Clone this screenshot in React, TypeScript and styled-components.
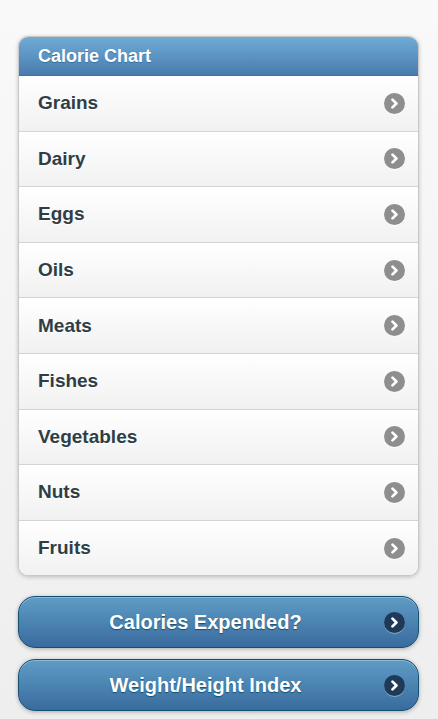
import React from 'react';
import styled, { createGlobalStyle } from 'styled-components';

const GlobalStyle = createGlobalStyle`
  html, body {
    margin: 0;
    padding: 0;
  }
  body {
    font-family: "Liberation Sans", Arial, Helvetica, sans-serif;
    background: linear-gradient(#f9f9f9, #eeeeee);
    min-height: 719px;
  }
`;

const foods = ['Grains', 'Dairy', 'Eggs', 'Oils', 'Meats', 'Fishes', 'Vegetables', 'Nuts', 'Fruits'];

// Круглая иконка со стрелкой вправо (как в jQuery Mobile)
const ArrowIcon: React.FC<{ dark?: boolean }> = ({ dark }) => (
  <IconDisc $dark={dark}>
    <svg width="11" height="11" viewBox="0 0 11 11">
      <path d="M3.5 1.6 L7.4 5.5 L3.5 9.4" fill="none" stroke="#fff" strokeWidth="2.7" strokeLinecap="round" strokeLinejoin="round" />
    </svg>
  </IconDisc>
);

const App: React.FC = () => {
  return (
    <>
      <GlobalStyle />
      <Page>
        <ListView>
          <Divider>Calorie Chart</Divider>
          {foods.map((food, i) => (
            <Row key={food} $last={i === foods.length - 1}>
              <RowLabel>{food}</RowLabel>
              <ArrowIcon />
            </Row>
          ))}
        </ListView>
        <Buttons>
          <BlueButton>
            <ButtonLabel>Calories Expended?</ButtonLabel>
            <ArrowIcon dark />
          </BlueButton>
          <BlueButton>
            <ButtonLabel>Weight/Height Index</ButtonLabel>
            <ArrowIcon dark />
          </BlueButton>
        </Buttons>
      </Page>
    </>
  );
};

const Page = styled.div`
  padding: 36px 19px 0 18px;
  display: flex;
  flex-direction: column;
`;

const ListView = styled.div`
  display: flex;
  flex-direction: column;
  border: 1px solid #c8c8c8;
  border-radius: 10px;
  overflow: hidden;
  box-shadow: 0 1px 4px rgba(0, 0, 0, 0.22);
  background: #fff;
`;

const Divider = styled.div`
  height: 38px;
  display: flex;
  align-items: center;
  padding-left: 19px;
  font-size: 18px;
  font-weight: bold;
  color: #fff;
  text-shadow: 0 1px 0 #3373a5;
  background: linear-gradient(#6facd5, #497bae);
  border-bottom: 1px solid #456f9a;
`;

const Row = styled.div<{ $last?: boolean }>`
  height: 54.6px;
  display: flex;
  align-items: center;
  justify-content: space-between;
  padding: 0 13px 0 19px;
  background: linear-gradient(#ffffff, #f1f1f1);
  border-bottom: ${(p) => (p.$last ? 'none' : '1px solid #d4d4d4')};
`;

const RowLabel = styled.span`
  font-size: 19px;
  font-weight: bold;
  color: #2f3e46;
  text-shadow: 0 1px 0 #fff;
`;

const IconDisc = styled.span<{ $dark?: boolean }>`
  width: 21px;
  height: 21px;
  border-radius: 50%;
  display: flex;
  align-items: center;
  justify-content: center;
  flex: none;
  background: ${(p) => (p.$dark ? '#1e3a58' : '#8e8e8e')};
  box-shadow: ${(p) => (p.$dark ? '0 1px 0 rgba(255,255,255,0.35)' : '0 1px 0 rgba(255,255,255,0.6)')};
`;

const Buttons = styled.div`
  display: flex;
  flex-direction: column;
  gap: 11px;
  margin-top: 20px;
`;

const BlueButton = styled.div`
  height: 50px;
  display: flex;
  align-items: center;
  padding: 0 13px 0 15px;
  border: 1px solid #145072;
  border-radius: 17px;
  background: linear-gradient(#5f9cc5, #396b9e);
  box-shadow: inset 0 1px 0 rgba(255, 255, 255, 0.3), 0 1px 4px rgba(0, 0, 0, 0.3);
`;

const ButtonLabel = styled.span`
  flex: 1;
  text-align: center;
  padding-right: 7px;
  font-size: 20px;
  font-weight: bold;
  color: #fff;
  text-shadow: 0 1px 1px #145072;
`;

export default App;
